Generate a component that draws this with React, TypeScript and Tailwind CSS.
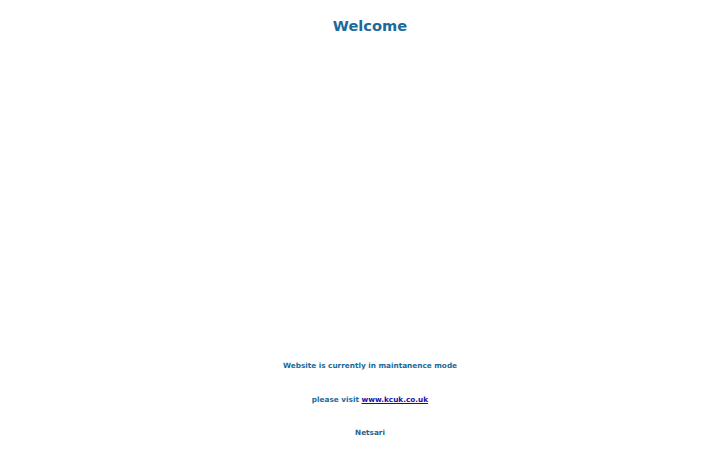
export default function App() {
	return (
		<div className="flex h-[450px] w-[720px] flex-col items-center bg-white pl-[20px] font-['DejaVu_Sans',sans-serif] font-bold text-[#1b6a9b]">
			<h1 className="mt-[16px] text-[14.6px] leading-[20px]">Welcome</h1>
			<div className="mt-[325px] flex flex-col items-center gap-[24px] text-[7.3px] leading-[9.5px]">
				<p>Website is currently in maintanence mode</p>
				<p>
					please visit{' '}
					<a href="#" className="text-[#1a0dab] underline">
						www.kcuk.co.uk
					</a>
				</p>
				<p className="text-[#2a5d8a]">Netsari</p>
			</div>
		</div>
	);
}
